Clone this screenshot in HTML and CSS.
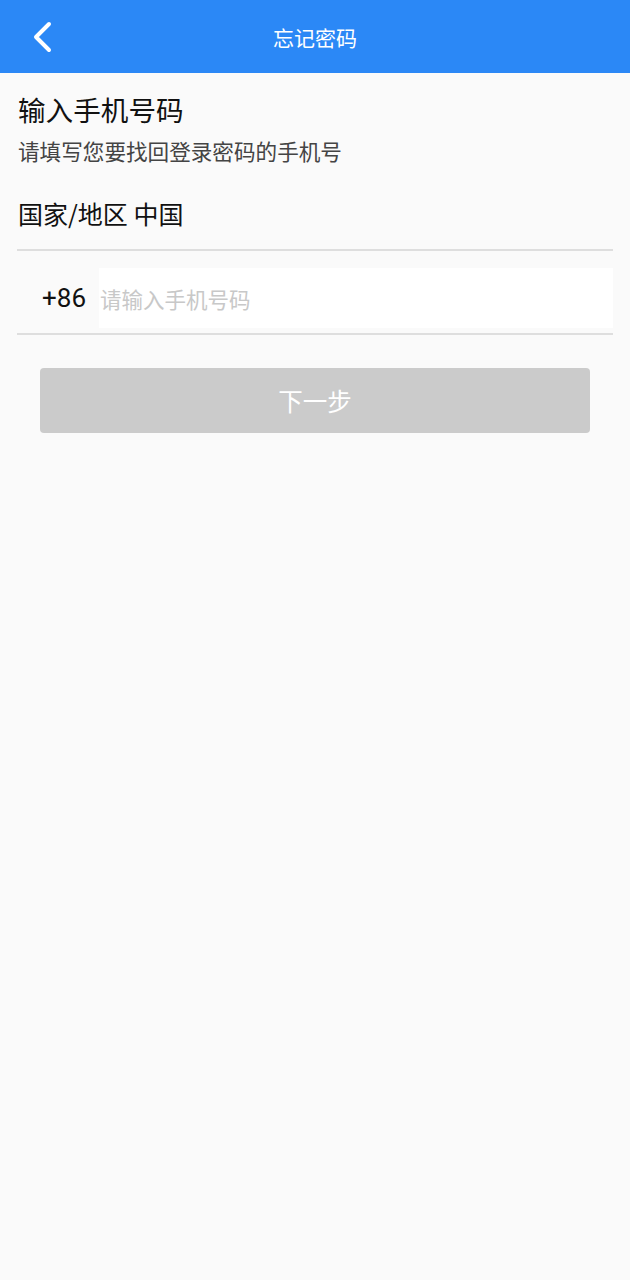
FILE: index.html
```html
<!DOCTYPE html>
<html lang="zh">
<head>
<meta charset="utf-8">
<title>忘记密码</title>
<link rel="stylesheet" href="styles.css">
</head>
<body>
<header class="topbar">
  <span class="back"><svg width="20" height="32" viewBox="0 0 20 32"><path d="M16 3 L3 16 L16 29" fill="none" stroke="#fff" stroke-width="4" stroke-linecap="round" stroke-linejoin="round"/></svg></span>
  <h1 class="title">忘记密码</h1>
</header>
<main class="content">
  <h2 class="heading">输入手机号码</h2>
  <p class="sub">请填写您要找回登录密码的手机号</p>
  <div class="country">国家/地区 中国</div>
  <div class="phone-row">
    <span class="code">+86</span>
    <div class="input">请输入手机号码</div>
  </div>
  <div class="btn-wrap"><button class="next">下一步</button></div>
</main>
</body>
</html>
```

FILE: styles.css
```css
html, body {
  margin: 0;
  padding: 0;
  background: #fafafa;
  font-family: "Noto Sans CJK SC", "Noto Sans", sans-serif;
}
.topbar {
  height: 73px;
  background: #2b88f6;
  display: flex;
  align-items: center;
  justify-content: center;
  position: relative;
}
.back {
  position: absolute;
  left: 33px;
  top: 21px;
  display: block;
  line-height: 0;
}
.title {
  margin: 0;
  color: #fff;
  font-size: 21px;
  font-weight: 400;
}
.content {
  padding: 16px 17px 0;
}
.heading {
  margin: 0;
  padding-left: 1px;
  font-size: 27.6px;
  font-weight: 400;
  color: #111;
  line-height: 40px;
}
.sub {
  margin: 7px 0 0;
  padding-left: 1px;
  font-size: 21.6px;
  line-height: 30px;
  color: #444;
}
.country {
  margin-top: 31px;
  padding-left: 1px;
  font-size: 25px;
  line-height: 32px;
  color: #111;
  padding-bottom: 20px;
  border-bottom: 2px solid #dedede;
}
.phone-row {
  display: flex;
  align-items: stretch;
  padding-top: 17px;
  padding-bottom: 5px;
  border-bottom: 2px solid #dedede;
}
.code {
  width: 82px;
  display: flex;
  align-items: center;
  justify-content: flex-end;
  padding-right: 13px;
  box-sizing: border-box;
  font-family: "Roboto", "Noto Sans", sans-serif;
  font-size: 26px;
  color: #111;
}
.input {
  flex: 1;
  height: 60px;
  background: #fff;
  display: flex;
  align-items: center;
  padding-left: 1px;
  font-size: 21.5px;
  color: #c8c8c8;
}
.btn-wrap {
  padding: 33px 23px 0;
}
.next {
  display: block;
  width: 100%;
  height: 65px;
  border: none;
  border-radius: 4px;
  background: #cbcbcb;
  color: #fff;
  font-family: "Noto Sans CJK SC", "Noto Sans", sans-serif;
  font-size: 24.5px;
  padding: 0;
}
```
